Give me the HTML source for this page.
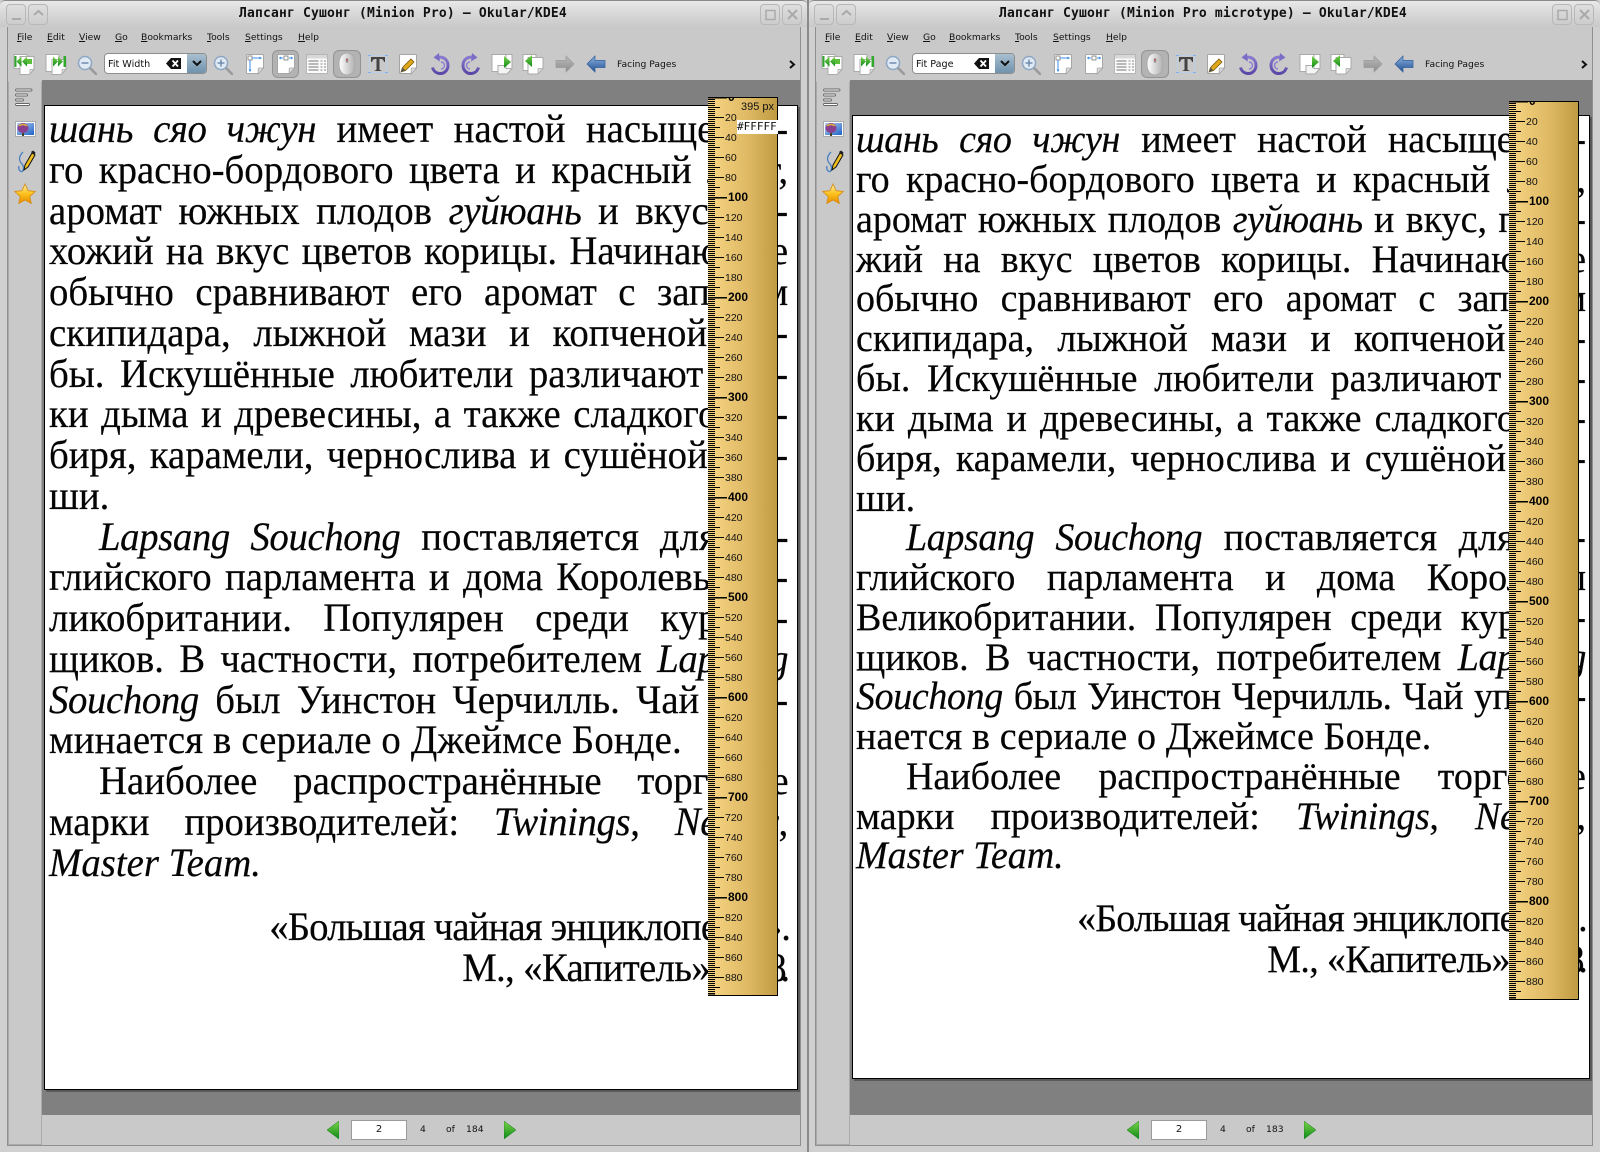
<!DOCTYPE html>
<html lang="ru"><head><meta charset="utf-8"><title>Okular</title>
<style>
html,body{margin:0;padding:0}
body{width:1600px;height:1152px;position:relative;overflow:hidden;background:#d0d0d0;font-family:"DejaVu Sans","Liberation Sans",sans-serif}
.a{position:absolute}
.tb{top:0;height:27px;background:linear-gradient(#e9e9e9,#dcdcdc 35%,#c9c9c9);border-top:1px solid #8a8a8a;box-sizing:border-box;border-radius:5px 5px 0 0}
.tt{top:5px;font:bold 13px/18px "DejaVu Sans Mono","Liberation Mono","Noto Sans CJK SC",monospace;letter-spacing:.17px;color:#111;white-space:pre}
.wb{top:4px;width:20px;height:21px;border:1px solid #b8b8b8;box-sizing:border-box;border-radius:4px;background:linear-gradient(#dedede,#cdcdcd)}
.wb svg{position:absolute;left:0;top:0}
.body{top:27px;background:#c9c9c9}
.menu{top:31px;font-size:9.2px;line-height:14px;color:#111;white-space:nowrap}
.menu u{text-underline-offset:1px}
.sm{font-size:9.2px;line-height:14px;color:#111;white-space:nowrap}
.cb{top:53px;height:21px;width:103px;box-sizing:border-box;border:1px solid #8e8e8e;border-radius:4px;background:#fff;overflow:hidden}
.cb .t{position:absolute;left:3px;top:3px;font-size:9.6px;line-height:15px;color:#111}
.cb .d{position:absolute;right:0;top:0;width:19px;height:19px;background:linear-gradient(#a9bfd0,#6f92ad)}
.tog{top:50px;height:28px;box-sizing:border-box;border:1px solid #939393;border-radius:6px;background:#b3b3b3}
.gray{background:#808080}
.side{background:#c9c9c9;border:1px solid #aaa;box-sizing:border-box;border-top:1px solid #c9c9c9}
.pg{background:#fff;border:1px solid #000;box-sizing:border-box;box-shadow:2px 2px 0 #5a5a5a}
.txt{transform-origin:0 0;transform:scaleX(.97);font-family:"Liberation Serif","Noto Serif CJK SC",serif;color:#050505;-webkit-text-stroke:.2px #050505}
.txt i{letter-spacing:-.4px}
.L{font-size:40px}
.R{font-size:39.2px}
.txt div{position:absolute;left:0;line-height:40px;height:40px;white-space:nowrap;text-align:justify;text-align-last:justify}
.L div{width:762px}
.R div{width:752.6px}
.txt div.s{text-align:left;text-align-last:left;width:auto}
.txt div.s i{letter-spacing:0}
.inp{top:1120px;width:56px;height:20px;box-sizing:border-box;border:1px solid #9a9a9a;background:#fff;text-align:center;font-size:10px;line-height:18px;color:#111}
.rul{overflow:hidden}
.rul text{font:10.5px "Liberation Sans",sans-serif;fill:#111}
.rul text.b{font:bold 12px "Liberation Sans",sans-serif;fill:#000}
</style></head><body>

<svg width="0" height="0" style="position:absolute"><defs>
<linearGradient id="grn" x1="0" x2="0" y1="0" y2="1"><stop offset="0" stop-color="#7cd44a"/><stop offset="1" stop-color="#0d8a18"/></linearGradient>
<linearGradient id="blu" x1="0" x2="0" y1="0" y2="1"><stop offset="0" stop-color="#8fb4de"/><stop offset="1" stop-color="#1f4f96"/></linearGradient>
<linearGradient id="gry" x1="0" x2="0" y1="0" y2="1"><stop offset="0" stop-color="#bcbcbc"/><stop offset="1" stop-color="#8b8b8b"/></linearGradient>
<linearGradient id="pur" x1="0" x2="0" y1="0" y2="1"><stop offset="0" stop-color="#8a7bd0"/><stop offset="1" stop-color="#5a46a6"/></linearGradient>
<linearGradient id="gld" x1="0" x2="0" y1="0" y2="1"><stop offset="0" stop-color="#fff3b0"/><stop offset=".5" stop-color="#fcc21c"/><stop offset="1" stop-color="#e88a00"/></linearGradient>
<linearGradient id="sky" x1="0" x2="1" y1="0" y2="1"><stop offset="0" stop-color="#b8d2ee"/><stop offset="1" stop-color="#1e62c8"/></linearGradient>
<linearGradient id="mou" x1="0" x2="1" y1="0" y2="0"><stop offset="0" stop-color="#fff"/><stop offset="1" stop-color="#b0b0b0"/></linearGradient>
<symbol id="page" viewBox="0 0 20 22"><path d="M2.5 1.5h15a1 1 0 0 1 1 1v12.5l-5.5 5.5H2.5a1 1 0 0 1-1-1v-17a1 1 0 0 1 1-1z" fill="#fff" stroke="#a5a5a5"/><path d="M18.5 15h-4.300a1 1 0 0 0-1 1v5z" fill="#dcdcdc" stroke="#a5a5a5" stroke-width=".8"/></symbol>
<symbol id="first" viewBox="0 0 22 22"><path d="M1 1.500h13v14H1z" fill="#fff" stroke="#aaa"/><path d="M7 3.500h14v13l-5 5H7z" fill="#fff" stroke="#aaa"/><path d="M21 16.500h-4v4z" fill="#ddd" stroke="#aaa" stroke-width=".7"/><rect x="1.500" y="3" width="2" height="11" fill="#2fa82b"/><path d="M3.500 8.500l5-5v10zM9 8.500l5-5v10z" fill="url(#grn)"/><rect x="14" y="6" width="5" height="5" fill="#5cc03a"/></symbol>
<symbol id="last" viewBox="0 0 22 22"><path d="M1 1.500h13v17H1z" fill="#fff" stroke="#aaa"/><path d="M7 6.500h11l3-1v11l-5 5H7z" fill="#fff" stroke="#aaa"/><path d="M21 16.500h-4v4z" fill="#ddd" stroke="#aaa" stroke-width=".7"/><rect x="18.500" y="3" width="2.500" height="11" fill="#2fa82b"/><path d="M18 8.500l-5-5v10zM13 8.500l-5-5v10z" fill="url(#grn)"/></symbol>
<symbol id="zo" viewBox="0 0 20 20"><path d="M12 12l7 7" stroke="#999" stroke-width="2.600" stroke-linecap="round"/><circle cx="8" cy="8" r="6.500" fill="#dfeaf5" stroke="#8ea6c2" stroke-width="1.500"/><path d="M4.500 8h7" stroke="#5f7fa6" stroke-width="1.300"/></symbol>
<symbol id="zi" viewBox="0 0 20 20"><path d="M12 12l7 7" stroke="#999" stroke-width="2.600" stroke-linecap="round"/><circle cx="8" cy="8" r="6.500" fill="#dfeaf5" stroke="#8ea6c2" stroke-width="1.500"/><path d="M4.500 8h7M8 4.500v7" stroke="#5f7fa6" stroke-width="1.300"/></symbol>
<symbol id="axis" viewBox="0 0 20 22"><use href="#page" width="20" height="22"/><rect x="3" y="3" width="4" height="4" fill="#fff" stroke="#777" stroke-width=".8"/><path d="M7 5h9M5 7v11" stroke="#3b8fe6"/><path d="M14.500 3.500l2.500 1.500-2.500 1.500zM3.500 16.500h3L5 19z" fill="#3b8fe6"/></symbol>
<symbol id="facing" viewBox="0 0 20 22"><use href="#page" width="20" height="22"/><rect x="8" y="3" width="4" height="4" fill="#fff" stroke="#777" stroke-width=".8"/><path d="M3 5h4M13 5h4" stroke="#3b8fe6"/><path d="M5 3.500L3 5l2 1.500zM15 3.500l2 1.500-2 1.500z" fill="#3b8fe6"/></symbol>
<symbol id="table" viewBox="0 0 22 20"><rect x=".5" y=".5" width="21" height="19" fill="#fafafa" stroke="#b5b5b5"/><rect x="1" y="1" width="20" height="3.500" fill="#d8d8d8"/><path d="M2.500 7h10M2.500 10h10M2.500 13h10M2.500 16h10" stroke="#777"/><path d="M14.500 7h2M18 7h2M14.500 10h2M18 10h2M14.500 13h2M18 13h2M14.500 16h2M18 16h2" stroke="#888"/></symbol>
<symbol id="mouse" viewBox="0 0 20 24"><path d="M10 1c5 0 8 4 8 11s-3 11-8 11-8-4-8-11 3-11 8-11z" fill="url(#mou)" stroke="#aaa"/><rect x="8.800" y="6" width="2.400" height="5" rx="1.200" fill="#999"/><rect x="9.400" y="7" width="1.200" height="2" fill="#c44"/></symbol>
<symbol id="tt" viewBox="0 0 20 20"><path d="M1.500 1.500h17v17h-17z" fill="none" stroke="#b8d0f0" stroke-width=".8"/><path d="M3 3h14v5h-1c-.5-2-1.500-3-3-3h-1.500v10c0 1 .5 1.300 2 1.500V17H6.500v-.5c1.500-.2 2-.5 2-1.500V5H7c-1.500 0-2.500 1-3 3H3z" fill="#444"/><path d="M0 1h3v1H0zM17 1h3v1h-3zM0 18h3v1H0zM17 18h3v1h-3z" fill="#7ab0f0"/></symbol>
<symbol id="pencil" viewBox="0 0 20 22"><use href="#page" width="20" height="22"/><path d="M3 19l1.500-4.500L13 6l3 3-8.500 8.500z" fill="#e0a818" stroke="#7a5a10" stroke-width=".8"/><path d="M3 19l1.500-4.500 3 3z" fill="#555"/></symbol>
<symbol id="rccw" viewBox="0 0 20 22"><path d="M7 4.500c5-1.500 10 2 10 8 0 4.500-3.500 8-7.500 8s-7-2.500-8-6" fill="none" stroke="url(#pur)" stroke-width="3"/><path d="M8 0L2.500 4.500 9 8.500z" fill="#7c6cc8"/><path d="M10 9c2 0 3.500 1.500 3.500 3.500S12 16 10 16" fill="none" stroke="#8f80d4" stroke-width="1.500"/></symbol>
<symbol id="rcw" viewBox="0 0 20 22"><path d="M13 4.500c-5-1.500-10 2-10 8 0 4.500 3.500 8 7.500 8s7-2.500 8-6" fill="none" stroke="url(#pur)" stroke-width="3"/><path d="M12 0l5.500 4.500L11 8.500z" fill="#7c6cc8"/><path d="M10 9c-2 0-3.500 1.500-3.500 3.500S8 16 10 16" fill="none" stroke="#8f80d4" stroke-width="1.500"/></symbol>
<symbol id="next" viewBox="0 0 22 22"><path d="M1 1.500h14v17H1z" fill="#fff" stroke="#aaa"/><path d="M7 12.500h14v3l-5 5.500H7z" fill="#f4f4f4" stroke="#aaa"/><path d="M15 1.500h6v14h-6z" fill="#fff" stroke="#aaa"/><path d="M13 3l7 6-7 6z" fill="url(#grn)"/></symbol>
<symbol id="prev" viewBox="0 0 22 22"><path d="M1 1.500h13v16H1z" fill="#fff" stroke="#aaa"/><path d="M6 4.500h15v11l-5 5.500H6z" fill="#fff" stroke="#aaa"/><path d="M21 15.500h-5v5.500z" fill="#ddd" stroke="#aaa" stroke-width=".7"/><path d="M10 2L3 8l7 6z" fill="url(#grn)"/></symbol>
<symbol id="ar" viewBox="0 0 20 18"><path d="M11 1l8 8-8 8v-4.500H1v-7h10z" fill="url(#gry)" stroke="#9a9a9a" stroke-width=".7"/></symbol>
<symbol id="al" viewBox="0 0 20 18"><path d="M9 1L1 9l8 8v-4.500h10v-7H9z" fill="url(#blu)" stroke="#2f5c9c" stroke-width=".7"/></symbol>
<symbol id="chev" viewBox="0 0 7 9"><path d="M1 1l4 3.500L1 8" fill="none" stroke="#111" stroke-width="2"/></symbol>
<symbol id="clr" viewBox="0 0 15 11"><path d="M5 0h10v11H5L0 5.500z" fill="#111"/><path d="M6.500 2.500l5.500 6M12 2.500l-5.500 6" stroke="#fff" stroke-width="1.800"/></symbol>
<symbol id="list" viewBox="0 0 18 18"><g fill="#fff" stroke="#666" stroke-width=".9"><rect x=".5" y="1" width="16.500" height="2" rx="1"/><rect x=".5" y="6" width="12" height="2" rx="1"/><rect x=".5" y="11" width="8" height="2" rx="1"/><rect x=".5" y="15.500" width="14" height="2" rx="1"/></g></symbol>
<symbol id="img" viewBox="0 0 21 16"><rect x=".5" y=".5" width="20" height="15" fill="#fff" stroke="#aaa"/><rect x="2" y="2" width="17" height="12" fill="url(#sky)"/><ellipse cx="8" cy="7" rx="5.500" ry="5" fill="#8a3f8e"/><path d="M4 5c2-2 6-2 8 0" stroke="#d8b040" stroke-width="1.500" fill="none"/><rect x="7" y="12" width="2" height="3" fill="#442"/></symbol>
<symbol id="pen" viewBox="0 0 20 23"><path d="M6 1C1 6 2 10 5 13c2 2 2 6 0 7.500C3 21 1 18 2 15" transform="translate(1 1)" fill="none" stroke="#4a7fc0" stroke-width="1.300"/><path d="M8 20l1-5 7-12 3 2-7 12z" fill="#f0c020" stroke="#111" stroke-width="1"/><path d="M15 2l2-1.500 2.500 2L18.500 5z" fill="#222"/></symbol>
<symbol id="star" viewBox="0 0 22 22"><path d="M11 1l3 6.700 7.200.8-5.400 4.900 1.500 7.100L11 17l-6.300 3.500 1.500-7.100L.8 8.500 8 7.700z" fill="url(#gld)" stroke="#d88a10" stroke-width=".8"/></symbol>
<symbol id="tl" viewBox="0 0 12 18"><path d="M12 0v18L0 9z" fill="url(#grn)" stroke="#0d7a14" stroke-width=".5"/></symbol>
<symbol id="tr" viewBox="0 0 12 18"><path d="M0 0v18L12 9z" fill="url(#grn)" stroke="#0d7a14" stroke-width=".5"/></symbol>
<pattern id="p2" width="7" height="2" patternUnits="userSpaceOnUse"><rect width="7" height="1" fill="#000"/></pattern>
<pattern id="p10" width="12" height="20" patternUnits="userSpaceOnUse"><rect y="10" width="12" height="1" fill="#000"/></pattern>
<pattern id="p20" width="16" height="20" patternUnits="userSpaceOnUse"><rect width="16" height="1" fill="#000"/></pattern>
<pattern id="p100" width="19" height="100" patternUnits="userSpaceOnUse"><rect width="19" height="1.500" fill="#000"/></pattern>
<linearGradient id="wood" x1="0" x2="1" y1="0" y2="0"><stop offset="0" stop-color="#f7d684"/><stop offset=".55" stop-color="#e0ba65"/><stop offset="1" stop-color="#bf9a42"/></linearGradient>
</defs></svg>

<!-- LEFT WINDOW -->
<div class="a tb" style="left:0;width:807px"></div>
<div class="a tt" style="left:239px">Лапсанг Сушонг (Minion Pro) – Okular/KDE4</div>
<div class="a wb" style="left:6px"><svg width="20" height="21"><path d="M5 14h9" stroke="#aaa" stroke-width="2"/></svg></div>
<div class="a wb" style="left:28px"><svg width="20" height="21"><path d="M5 10l4.500-4 4.500 4" fill="none" stroke="#aaa" stroke-width="2"/></svg></div>
<div class="a wb" style="left:760px"><svg width="20" height="21"><rect x="5" y="5.500" width="9" height="9" fill="none" stroke="#aaa" stroke-width="1.500"/></svg></div>
<div class="a wb" style="left:782px"><svg width="20" height="21"><path d="M5 5l9 9M14 5l-9 9" stroke="#aaa" stroke-width="2"/></svg></div>
<div class="a body" style="left:7px;width:794px;height:1119px;border:1px solid #8f8f8f;border-top:0;box-sizing:border-box"></div>
<div class="a menu" style="left:17px"><u>F</u>ile</div><div class="a menu" style="left:47px"><u>E</u>dit</div><div class="a menu" style="left:79px"><u>V</u>iew</div><div class="a menu" style="left:115px"><u>G</u>o</div><div class="a menu" style="left:141px"><u>B</u>ookmarks</div><div class="a menu" style="left:207px"><u>T</u>ools</div><div class="a menu" style="left:245px"><u>S</u>ettings</div><div class="a menu" style="left:298px"><u>H</u>elp</div>
<svg class="a" style="left:13px;top:53px" width="22" height="22"><use href="#first"/></svg>
<svg class="a" style="left:45px;top:53px" width="22" height="22"><use href="#last"/></svg>
<svg class="a" style="left:77px;top:55px" width="20" height="20"><use href="#zo"/></svg>
<div class="a cb" style="left:104px"><div class="t">Fit Width</div><svg class="a" style="left:61px;top:4px" width="15" height="11"><use href="#clr"/></svg><div class="d"><svg class="a" style="left:5px;top:6px" width="10" height="8"><path d="M1 1l4 4 4-4" fill="none" stroke="#111" stroke-width="2"/></svg></div></div>
<svg class="a" style="left:213px;top:55px" width="20" height="20"><use href="#zi"/></svg>
<svg class="a" style="left:245px;top:53px" width="20" height="22"><use href="#axis"/></svg>
<div class="a tog" style="left:272px;width:27px"></div>
<svg class="a" style="left:276px;top:53px" width="20" height="22"><use href="#facing"/></svg>
<svg class="a" style="left:306px;top:54px" width="22" height="20"><use href="#table"/></svg>
<div class="a tog" style="left:333px;width:28px"></div>
<svg class="a" style="left:337px;top:52px" width="20" height="24"><use href="#mouse"/></svg>
<svg class="a" style="left:368px;top:54px" width="20" height="20"><use href="#tt"/></svg>
<svg class="a" style="left:398px;top:53px" width="20" height="22"><use href="#pencil"/></svg>
<svg class="a" style="left:431px;top:53px" width="20" height="22"><use href="#rccw"/></svg>
<svg class="a" style="left:460px;top:53px" width="20" height="22"><use href="#rcw"/></svg>
<svg class="a" style="left:491px;top:53px" width="22" height="22"><use href="#next"/></svg>
<svg class="a" style="left:522px;top:53px" width="22" height="22"><use href="#prev"/></svg>
<svg class="a" style="left:555px;top:55px" width="20" height="18"><use href="#ar"/></svg>
<svg class="a" style="left:586px;top:55px" width="20" height="18"><use href="#al"/></svg>
<div class="a sm" style="left:617px;top:58px">Facing Pages</div>
<svg class="a" style="left:789px;top:60px" width="7" height="9"><use href="#chev"/></svg>

<div class="a gray" style="left:42px;top:80px;width:758px;height:1035px"></div>
<div class="a side" style="left:8px;top:81px;width:34px;height:1064px"></div>
<svg class="a" style="left:15px;top:88px" width="18" height="18"><use href="#list"/></svg>
<svg class="a" style="left:15px;top:121px" width="21" height="16"><use href="#img"/></svg>
<svg class="a" style="left:16px;top:150px" width="20" height="23"><use href="#pen"/></svg>
<svg class="a" style="left:14px;top:183px" width="22" height="22"><use href="#star"/></svg>

<div class="a pg" style="left:44px;top:105px;width:754px;height:985px"></div>
<div class="a txt L" style="left:48.500px;top:2.500px;width:762px">
<div style="top:106.500px"><i>шань сяо чжун</i> имеет настой насыщенно-</div>
<div style="top:147.300px">го красно-бордового цвета и красный лист,</div>
<div style="top:188px">аромат южных плодов <i>гуйюань</i> и вкус, по-</div>
<div style="top:228.800px">хожий на вкус цветов корицы. Начинающие</div>
<div style="top:269.500px">обычно сравнивают его аромат с запахом</div>
<div style="top:310.300px">скипидара, лыжной мази и копченой ры-</div>
<div style="top:351.100px">бы. Искушённые любители различают нот-</div>
<div style="top:391.800px">ки дыма и древесины, а также сладкого им-</div>
<div style="top:432.600px">биря, карамели, чернослива и сушёной гру-</div>
<div class="s" style="top:473.300px">ши.</div>
<div style="top:514.100px;left:51.500px;width:711px"><i>Lapsang Souchong</i> поставляется для ан-</div>
<div style="top:554.900px">глийского парламента и дома Королевы Ве-</div>
<div style="top:595.600px">ликобритании. Популярен среди куриль-</div>
<div style="top:636.400px">щиков. В частности, потребителем <i>Lapsang</i></div>
<div style="top:677.100px"><i>Souchong</i> был Уинстон Черчилль. Чай упо-</div>
<div class="s" style="top:717.900px;letter-spacing:.15px">минается в сериале о Джеймсе Бонде.</div>
<div style="top:758.700px;left:51.500px;width:711px">Наиболее распространённые торговые</div>
<div style="top:799.400px">марки производителей: <i>Twinings</i>, <i>Newby</i>,</div>
<div class="s" style="top:840.200px"><i>Master Team.</i></div>
<div style="top:904.500px;left:227px;width:535px;letter-spacing:-.9px">«Большая чайная энциклопе<span style="letter-spacing:-4.400px">дия</span>».</div>
<div style="top:945.300px;left:426px;width:336px;letter-spacing:-.7px">М., «Капитель», <span style="letter-spacing:-6.500px">2008</span>.</div>
</div>

<svg class="a rul" style="left:708px;top:97px" width="70" height="899" viewBox="0 0 70 899">
<rect width="70" height="899" fill="url(#wood)"/>
<rect width="7" height="899" fill="url(#p2)"/><rect width="12" height="899" fill="url(#p10)"/><rect width="16" height="899" fill="url(#p20)"/><rect width="19" height="899" fill="url(#p100)"/>
<rect x="0" y="897.500" width="7" height="1.500" fill="#000"/>
<path d="M.5 .5H69.500V898.500H.5" fill="none" stroke="#000"/>
<text class="b" x="20" y="4">0</text>
<text x="17" y="24">20</text><text x="17" y="44">40</text><text x="17" y="64">60</text><text x="17" y="84">80</text><text class="b" x="20" y="104">100</text><text x="17" y="124">120</text><text x="17" y="144">140</text><text x="17" y="164">160</text><text x="17" y="184">180</text><text class="b" x="20" y="204">200</text><text x="17" y="224">220</text><text x="17" y="244">240</text><text x="17" y="264">260</text><text x="17" y="284">280</text><text class="b" x="20" y="304">300</text><text x="17" y="324">320</text><text x="17" y="344">340</text><text x="17" y="364">360</text><text x="17" y="384">380</text><text class="b" x="20" y="404">400</text><text x="17" y="424">420</text><text x="17" y="444">440</text><text x="17" y="464">460</text><text x="17" y="484">480</text><text class="b" x="20" y="504">500</text><text x="17" y="524">520</text><text x="17" y="544">540</text><text x="17" y="564">560</text><text x="17" y="584">580</text><text class="b" x="20" y="604">600</text><text x="17" y="624">620</text><text x="17" y="644">640</text><text x="17" y="664">660</text><text x="17" y="684">680</text><text class="b" x="20" y="704">700</text><text x="17" y="724">720</text><text x="17" y="744">740</text><text x="17" y="764">760</text><text x="17" y="784">780</text><text class="b" x="20" y="804">800</text><text x="17" y="824">820</text><text x="17" y="844">840</text><text x="17" y="864">860</text><text x="17" y="884">880</text>
</svg>
<div class="a" style="left:741px;top:100px;font:11px/14px 'Liberation Sans',sans-serif;color:#111;white-space:nowrap">395 px</div>
<div class="a" style="left:737px;top:120px;width:41px;height:14px;background:#fff;font:11px/14px 'DejaVu Sans Mono','Liberation Mono',monospace;color:#111;white-space:nowrap;overflow:hidden">#FFFFF</div>

<svg class="a" style="left:327px;top:1121px" width="12" height="18"><use href="#tl"/></svg>
<div class="a inp" style="left:351px">2</div>
<div class="a sm" style="left:420px;top:1123px">4</div><div class="a sm" style="left:446px;top:1123px">of</div><div class="a sm" style="left:466px;top:1123px">184</div>
<svg class="a" style="left:504px;top:1121px" width="12" height="18"><use href="#tr"/></svg>

<!-- separator -->
<div class="a" style="left:807px;top:0;width:2px;height:1152px;background:#8a8a8a"></div>

<!-- RIGHT WINDOW -->
<div class="a tb" style="left:809px;width:791px"></div>
<div class="a tt" style="left:999px">Лапсанг Сушонг (Minion Pro microtype) – Okular/KDE4</div>
<div class="a wb" style="left:814px"><svg width="20" height="21"><path d="M5 14h9" stroke="#aaa" stroke-width="2"/></svg></div>
<div class="a wb" style="left:836px"><svg width="20" height="21"><path d="M5 10l4.500-4 4.500 4" fill="none" stroke="#aaa" stroke-width="2"/></svg></div>
<div class="a wb" style="left:1552px"><svg width="20" height="21"><rect x="5" y="5.500" width="9" height="9" fill="none" stroke="#aaa" stroke-width="1.500"/></svg></div>
<div class="a wb" style="left:1574px"><svg width="20" height="21"><path d="M5 5l9 9M14 5l-9 9" stroke="#aaa" stroke-width="2"/></svg></div>
<div class="a body" style="left:815px;width:778px;height:1119px;border:1px solid #8f8f8f;border-top:0;box-sizing:border-box"></div>
<div class="a menu" style="left:825px"><u>F</u>ile</div><div class="a menu" style="left:855px"><u>E</u>dit</div><div class="a menu" style="left:887px"><u>V</u>iew</div><div class="a menu" style="left:923px"><u>G</u>o</div><div class="a menu" style="left:949px"><u>B</u>ookmarks</div><div class="a menu" style="left:1015px"><u>T</u>ools</div><div class="a menu" style="left:1053px"><u>S</u>ettings</div><div class="a menu" style="left:1106px"><u>H</u>elp</div>
<svg class="a" style="left:821px;top:53px" width="22" height="22"><use href="#first"/></svg>
<svg class="a" style="left:853px;top:53px" width="22" height="22"><use href="#last"/></svg>
<svg class="a" style="left:885px;top:55px" width="20" height="20"><use href="#zo"/></svg>
<div class="a cb" style="left:912px"><div class="t">Fit Page</div><svg class="a" style="left:61px;top:4px" width="15" height="11"><use href="#clr"/></svg><div class="d"><svg class="a" style="left:5px;top:6px" width="10" height="8"><path d="M1 1l4 4 4-4" fill="none" stroke="#111" stroke-width="2"/></svg></div></div>
<svg class="a" style="left:1021px;top:55px" width="20" height="20"><use href="#zi"/></svg>
<svg class="a" style="left:1053px;top:53px" width="20" height="22"><use href="#axis"/></svg>
<svg class="a" style="left:1084px;top:53px" width="20" height="22"><use href="#facing"/></svg>
<svg class="a" style="left:1114px;top:54px" width="22" height="20"><use href="#table"/></svg>
<div class="a tog" style="left:1141px;width:28px"></div>
<svg class="a" style="left:1145px;top:52px" width="20" height="24"><use href="#mouse"/></svg>
<svg class="a" style="left:1176px;top:54px" width="20" height="20"><use href="#tt"/></svg>
<svg class="a" style="left:1206px;top:53px" width="20" height="22"><use href="#pencil"/></svg>
<svg class="a" style="left:1239px;top:53px" width="20" height="22"><use href="#rccw"/></svg>
<svg class="a" style="left:1268px;top:53px" width="20" height="22"><use href="#rcw"/></svg>
<svg class="a" style="left:1299px;top:53px" width="22" height="22"><use href="#next"/></svg>
<svg class="a" style="left:1330px;top:53px" width="22" height="22"><use href="#prev"/></svg>
<svg class="a" style="left:1363px;top:55px" width="20" height="18"><use href="#ar"/></svg>
<svg class="a" style="left:1394px;top:55px" width="20" height="18"><use href="#al"/></svg>
<div class="a sm" style="left:1425px;top:58px">Facing Pages</div>
<svg class="a" style="left:1581px;top:60px" width="7" height="9"><use href="#chev"/></svg>

<div class="a gray" style="left:850px;top:80px;width:742px;height:1035px"></div>
<div class="a side" style="left:816px;top:81px;width:34px;height:1064px"></div>
<svg class="a" style="left:823px;top:88px" width="18" height="18"><use href="#list"/></svg>
<svg class="a" style="left:823px;top:121px" width="21" height="16"><use href="#img"/></svg>
<svg class="a" style="left:824px;top:150px" width="20" height="23"><use href="#pen"/></svg>
<svg class="a" style="left:822px;top:183px" width="22" height="22"><use href="#star"/></svg>

<div class="a pg" style="left:852px;top:115px;width:738px;height:964px"></div>
<div class="a txt R" style="left:856px;top:3px;width:752.600px">
<div style="top:116.800px"><i>шань сяо чжун</i> имеет настой насыщенно-</div>
<div style="top:156.700px">го красно-бордового цвета и красный лист,</div>
<div style="top:196.600px">аромат южных плодов <i>гуйюань</i> и вкус, похо-</div>
<div style="top:236.500px">жий на вкус цветов корицы. Начинающие</div>
<div style="top:276.400px">обычно сравнивают его аромат с запахом</div>
<div style="top:316.300px">скипидара, лыжной мази и копченой ры-</div>
<div style="top:356.200px">бы. Искушённые любители различают нот-</div>
<div style="top:396.100px">ки дыма и древесины, а также сладкого им-</div>
<div style="top:436px">биря, карамели, чернослива и сушёной гру-</div>
<div class="s" style="top:475.900px">ши.</div>
<div style="top:514.800px;left:51.500px;width:701px"><i>Lapsang Souchong</i> поставляется для ан-</div>
<div style="top:554.700px">глийского парламента и дома Королевы</div>
<div style="top:594.600px">Великобритании. Популярен среди куриль-</div>
<div style="top:634.500px">щиков. В частности, потребителем <i>Lapsang</i></div>
<div style="top:674.400px;letter-spacing:-.45px"><i>Souchong</i> был Уинстон Черчилль. Чай упоми-</div>
<div class="s" style="top:714.300px;letter-spacing:.15px">нается в сериале о Джеймсе Бонде.</div>
<div style="top:754.200px;left:51.500px;width:701px">Наиболее распространённые торговые</div>
<div style="top:794.100px">марки производителей: <i>Twinings</i>, <i>Newby</i>,</div>
<div class="s" style="top:833px"><i>Master Team.</i></div>
<div style="top:896.300px;left:228px;width:524px;letter-spacing:-.9px">«Большая чайная энциклопе<span style="letter-spacing:-4.400px">дия</span>».</div>
<div style="top:937.200px;left:424px;width:328px;letter-spacing:-.7px">М., «Капитель», <span style="letter-spacing:-6.500px">2008</span>.</div>
</div>

<svg class="a rul" style="left:1509px;top:101px" width="70" height="899" viewBox="0 0 70 899">
<rect width="70" height="899" fill="url(#wood)"/>
<rect width="7" height="899" fill="url(#p2)"/><rect width="12" height="899" fill="url(#p10)"/><rect width="16" height="899" fill="url(#p20)"/><rect width="19" height="899" fill="url(#p100)"/>
<rect x="0" y="897.500" width="7" height="1.500" fill="#000"/>
<path d="M.5 .5H69.500V898.500H.5" fill="none" stroke="#000"/>
<text class="b" x="20" y="4">0</text>
<text x="17" y="24">20</text><text x="17" y="44">40</text><text x="17" y="64">60</text><text x="17" y="84">80</text><text class="b" x="20" y="104">100</text><text x="17" y="124">120</text><text x="17" y="144">140</text><text x="17" y="164">160</text><text x="17" y="184">180</text><text class="b" x="20" y="204">200</text><text x="17" y="224">220</text><text x="17" y="244">240</text><text x="17" y="264">260</text><text x="17" y="284">280</text><text class="b" x="20" y="304">300</text><text x="17" y="324">320</text><text x="17" y="344">340</text><text x="17" y="364">360</text><text x="17" y="384">380</text><text class="b" x="20" y="404">400</text><text x="17" y="424">420</text><text x="17" y="444">440</text><text x="17" y="464">460</text><text x="17" y="484">480</text><text class="b" x="20" y="504">500</text><text x="17" y="524">520</text><text x="17" y="544">540</text><text x="17" y="564">560</text><text x="17" y="584">580</text><text class="b" x="20" y="604">600</text><text x="17" y="624">620</text><text x="17" y="644">640</text><text x="17" y="664">660</text><text x="17" y="684">680</text><text class="b" x="20" y="704">700</text><text x="17" y="724">720</text><text x="17" y="744">740</text><text x="17" y="764">760</text><text x="17" y="784">780</text><text class="b" x="20" y="804">800</text><text x="17" y="824">820</text><text x="17" y="844">840</text><text x="17" y="864">860</text><text x="17" y="884">880</text>
</svg>

<svg class="a" style="left:1127px;top:1121px" width="12" height="18"><use href="#tl"/></svg>
<div class="a inp" style="left:1151px">2</div>
<div class="a sm" style="left:1220px;top:1123px">4</div><div class="a sm" style="left:1246px;top:1123px">of</div><div class="a sm" style="left:1266px;top:1123px">183</div>
<svg class="a" style="left:1304px;top:1121px" width="12" height="18"><use href="#tr"/></svg>
</body></html>
